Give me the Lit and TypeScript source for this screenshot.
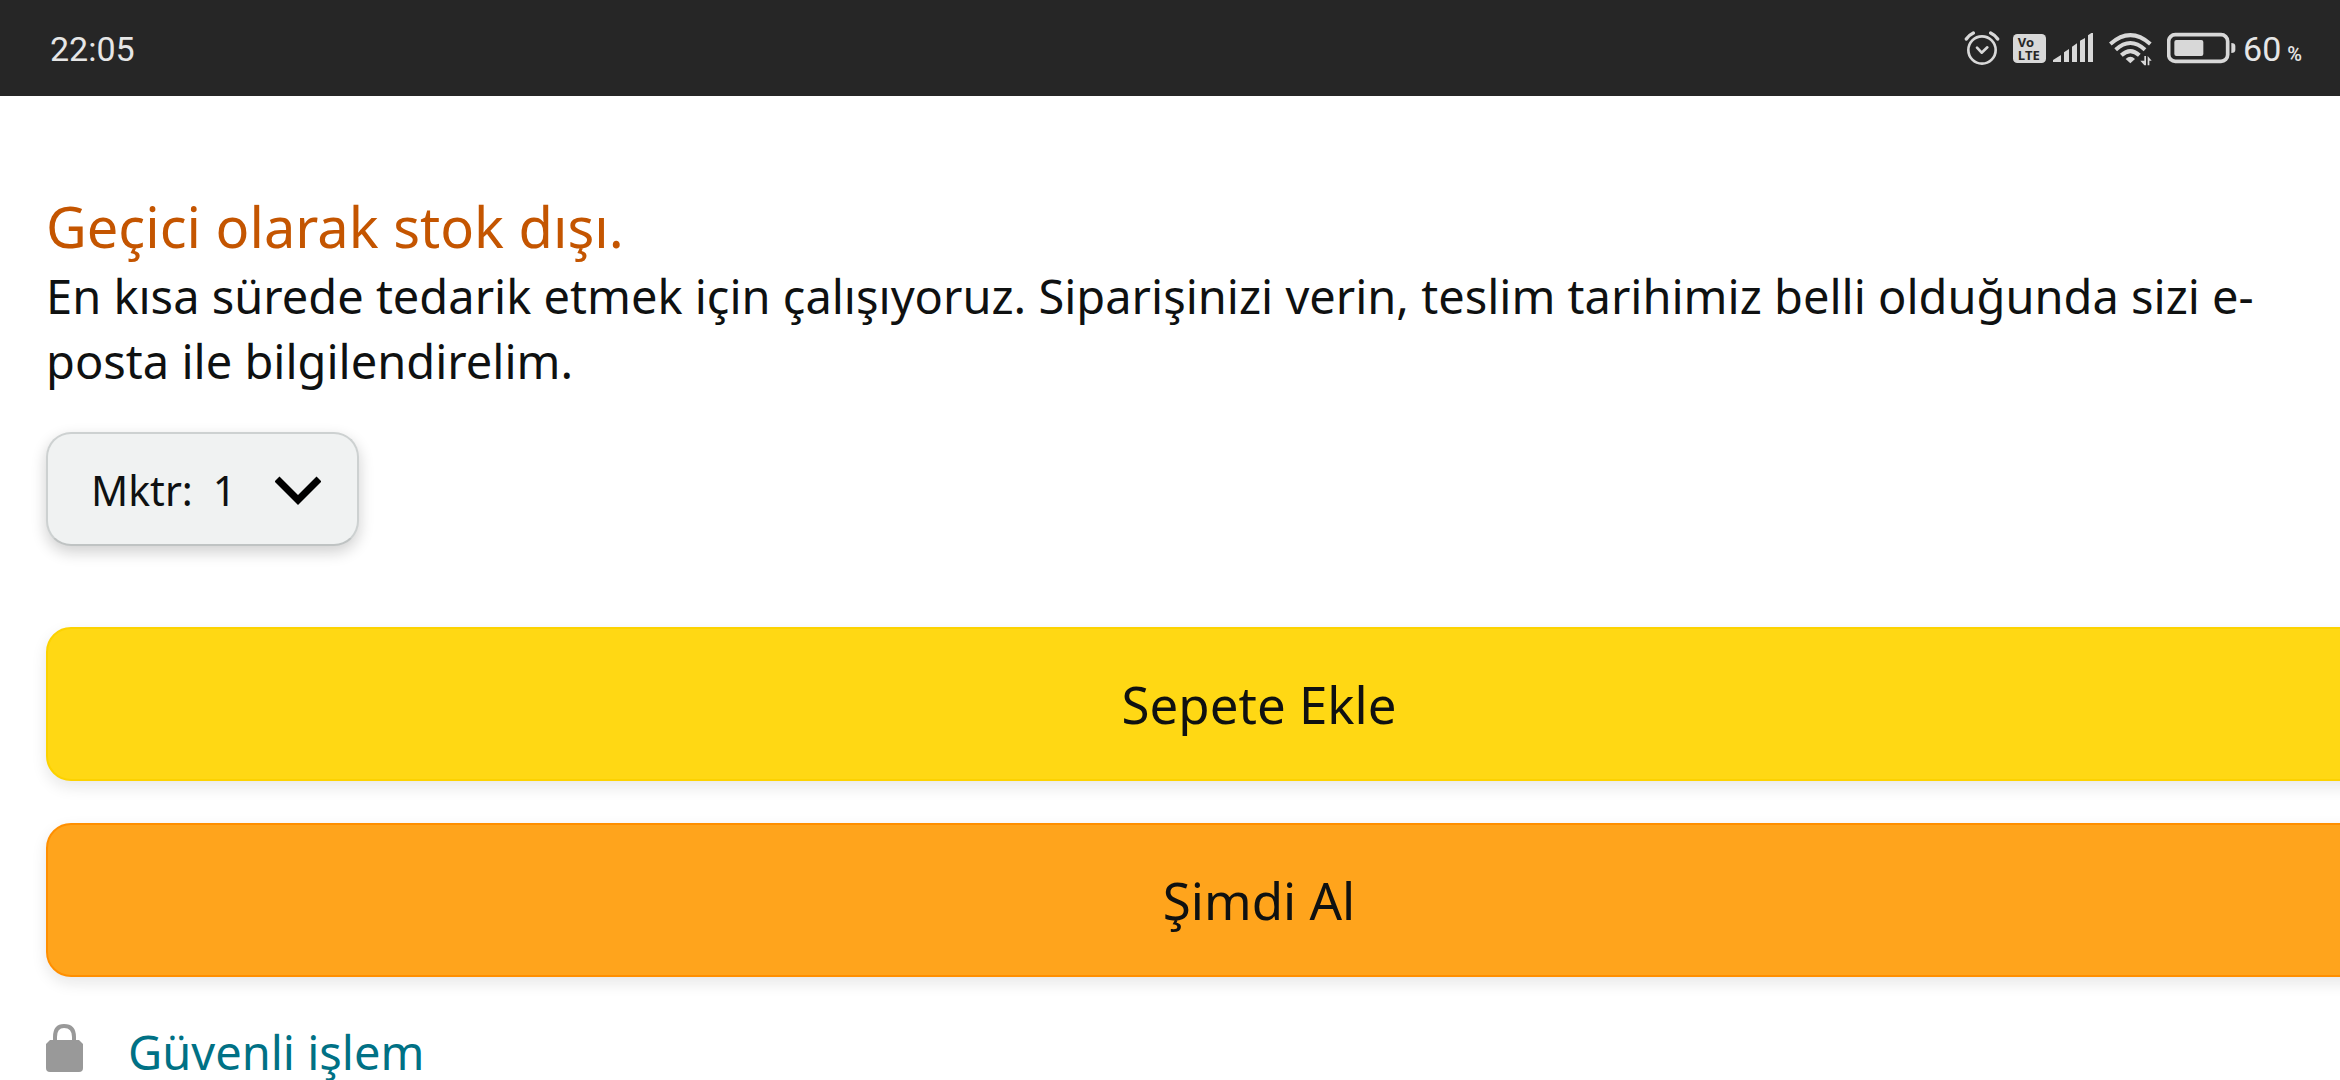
import { LitElement, html, css } from "lit";
import { customElement, state } from "lit/decorators.js";

@customElement("status-bar")
class StatusBar extends LitElement {
  static styles = css`
    :host {
      display: flex;
      align-items: center;
      justify-content: space-between;
      box-sizing: border-box;
      height: 96px;
      padding: 2px 38px 0 50px;
      background: #262626;
      color: #e6e6e6;
      font-family: Roboto, "Noto Sans", sans-serif;
      font-size: 34px;
      line-height: 40px;
    }
    .icons {
      display: flex;
      align-items: center;
      color: #d8d8d8;
    }
    svg {
      display: block;
      fill: currentColor;
    }
    .alarm { margin-right: 13px; }
    .volte { margin-right: 7px; }
    .signal { margin-right: 15px; }
    .wifi { margin-right: 15px; }
    .battery { margin-right: 7px; }
    .level {
      display: flex;
      align-items: baseline;
      gap: 6px;
      color: #e6e6e6;
    }
    .unit {
      font-size: 20px;
      font-weight: 500;
      line-height: 20px;
    }
    .badge {
      font-family: "Open Sans", "Noto Sans", sans-serif;
      font-weight: 700;
      font-size: 39px;
      fill: #262626;
    }
  `;

  render() {
    return html`
      <time>22:05</time>
      <div class="icons">
        <svg class="alarm" width="36" height="36" viewBox="0 0 108 108" aria-hidden="true">
          <g fill="none" stroke="currentColor" stroke-linecap="round" stroke-linejoin="round">
            <circle cx="54" cy="57" r="41" stroke-width="8" />
            <path d="M39 50 L53 65 L70 49" stroke-width="8" />
            <path d="M7 24 Q15 12 28 6 M101 24 Q93 12 80 6" stroke-width="10" />
          </g>
        </svg>
        <svg class="volte" width="33" height="36" viewBox="0 0 99 108" aria-hidden="true">
          <rect x="0" y="9" width="99" height="87" rx="13" />
          <text class="badge" x="14" y="47">Vo</text>
          <text class="badge" x="14" y="87">LTE</text>
        </svg>
        <svg class="signal" width="41" height="36" viewBox="0 0 123 108" aria-hidden="true">
          <path d="M0 93 V87 L24 72 V93Z M33 93 V64 L48 54 V93Z M57 93 V47 L72 37 V93Z M81 93 V29 L96 21 V93Z M105 93 V13 L115 6 H120 V93Z" />
        </svg>
        <svg class="wifi" width="43" height="36" viewBox="0 0 129 108" aria-hidden="true">
          <g fill="none" stroke="currentColor" stroke-width="12">
            <path d="M4 39 Q64 -14 124 39" />
            <path d="M20 56 Q64 16 108 56" />
            <path d="M37 73 Q64 48 91 73" />
          </g>
          <path d="M64 97 L50 84 Q64 71 78 84Z" />
          <path d="M106 75 V103 H111 V75Z M94 89 H106 V103Z M116 75 V103 H121 V89 H128 L116 75Z" />
        </svg>
        <svg class="battery" width="69" height="36" viewBox="0 0 207 108" aria-hidden="true">
          <rect x="5" y="11" width="177" height="80" rx="20" fill="none" stroke="currentColor" stroke-width="11" />
          <rect x="22" y="27" width="87" height="48" rx="6" />
          <path d="M193 36 Q205 36 205 45 V57 Q205 66 193 66Z" />
        </svg>
        <div class="level"><span>60</span><span class="unit">%</span></div>
      </div>
    `;
  }
}

@customElement("app-root")
class AppRoot extends LitElement {
  static styles = css`
    :host {
      display: block;
      height: 100vh;
      overflow: hidden;
      background: #fff;
      color: #0f1111;
      font-family: "Noto Sans", sans-serif;
      font-size: 47px;
      line-height: 65px;
    }
    main {
      display: flex;
      flex-direction: column;
      align-items: flex-start;
      padding: 94px 46px 0;
    }
    h1 {
      margin: 0 0 2px;
      color: #c45500;
      font-size: 56px;
      font-weight: 400;
      line-height: 72px;
    }
    p {
      margin: 0;
    }
    .quantity {
      display: flex;
      align-items: center;
      box-sizing: border-box;
      height: 114px;
      margin-top: 38px;
      padding: 2px 36px 0 43px;
      border: 2px solid #cdd1d1;
      border-bottom-color: #bfc3c3;
      border-radius: 25px;
      background: #f0f2f2;
      box-shadow: 0 6px 15px rgba(15, 17, 17, 0.2);
      font-size: 41px;
    }
    select {
      appearance: none;
      margin: 0 38px 0 20px;
      padding: 0;
      border: 0;
      background: transparent;
      color: inherit;
      font: inherit;
    }
    .chevron {
      display: block;
      fill: none;
      stroke: #000;
      stroke-width: 7;
    }
    .actions {
      display: flex;
      flex-direction: column;
      align-self: stretch;
      gap: 42px;
      margin: 81px -178px 0 0;
    }
    button {
      height: 154px;
      padding: 0;
      border: 2px solid #fcd200;
      border-radius: 25px;
      background: #ffd814;
      box-shadow: 0 6px 15px rgba(15, 17, 17, 0.1);
      color: inherit;
      font: inherit;
      font-size: 51px;
    }
    .buy {
      border-color: #ff8f00;
      background: #ffa41c;
    }
    .secure {
      display: flex;
      align-items: flex-start;
      gap: 45px;
      margin-top: 43px;
      color: #007185;
      text-decoration: none;
    }
    .lock {
      display: block;
      margin-top: 4px;
      fill: #999;
    }
  `;

  @state() private quantity = "1";

  private pick(e: Event) {
    this.quantity = (e.target as HTMLSelectElement).value;
  }

  render() {
    return html`
      <status-bar></status-bar>
      <main>
        <h1>Geçici olarak stok dışı.</h1>
        <p>
          En kısa sürede tedarik etmek için çalışıyoruz. Siparişinizi verin, teslim tarihimiz belli
          olduğunda sizi e-posta ile bilgilendirelim.
        </p>
        <div class="quantity">
          <label for="qty">Mktr:</label>
          <select id="qty" .value=${this.quantity} @change=${this.pick}>
            <option>1</option>
            <option>2</option>
            <option>3</option>
          </select>
          <svg class="chevron" width="46" height="30" viewBox="0 0 46 30" aria-hidden="true">
            <path d="M2 4 L23 25 L44 4" />
          </svg>
        </div>
        <div class="actions">
          <button type="button">Sepete Ekle</button>
          <button type="button" class="buy">Şimdi Al</button>
        </div>
        <a class="secure" href="#secure">
          <svg class="lock" width="37" height="48" viewBox="0 0 37 48" aria-hidden="true">
            <path d="M9 20 V13 Q9 2 18 2 Q28 2 28 13 V20" fill="none" stroke="#999" stroke-width="4" />
            <path d="M4 16 H33 L37 20 V44 Q37 48 33 48 H4 Q0 48 0 44 V20Z" />
          </svg>
          <span>Güvenli işlem</span>
        </a>
      </main>
    `;
  }
}
